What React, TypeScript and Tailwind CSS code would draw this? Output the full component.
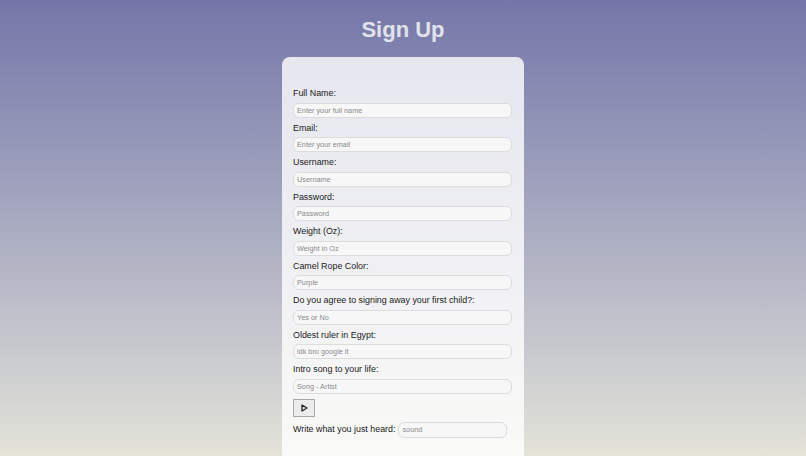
const fields = [
  { label: "Full Name:", placeholder: "Enter your full name" },
  { label: "Email:", placeholder: "Enter your email" },
  { label: "Username:", placeholder: "Username" },
  { label: "Password:", placeholder: "Password" },
  { label: "Weight (Oz):", placeholder: "Weight in Oz" },
  { label: "Camel Rope Color:", placeholder: "Purple" },
  { label: "Do you agree to signing away your first child?:", placeholder: "Yes or No" },
  { label: "Oldest ruler in Egypt:", placeholder: "idk bro google it" },
  { label: "Intro song to your life:", placeholder: "Song - Artist" },
];

function Field({ label, placeholder }: { label: string; placeholder: string }) {
  return (
    <div className="flex flex-col">
      <label className="h-[12px] pt-[1px] text-[8.9px] leading-[12px] text-[#1a1a1a]">{label}</label>
      <input
        placeholder={placeholder}
        className="mt-[4.5px] mb-[3px] h-[15px] w-[219px] rounded-[6px] border border-[#dcdcdc] bg-[#f7f7f8] px-[3px] text-[7.3px] text-[#333] outline-none placeholder:text-[#8a8a8a]"
      />
    </div>
  );
}

export default function App() {
  return (
    <div
      className="flex h-[456px] flex-col items-center overflow-hidden bg-gradient-to-b from-[#7476a8] to-[#e3e3d8]"
      style={{ fontFamily: '"Liberation Sans", Arial, sans-serif' }}
    >
      <h1 className="mt-[17px] h-[26px] text-[22px] font-bold leading-[26px] text-[#e2e2ea]">Sign Up</h1>
      <div className="mt-[14px] w-[242px] flex-1 rounded-t-[8px] bg-white/80 px-[11px] pt-[29px]">
        {fields.map((f) => (
          <Field key={f.label} {...f} />
        ))}
        <button className="mt-[2px] flex h-[18px] w-[22px] items-center justify-center border border-[#a8a8a8] bg-[#ececec]">
          <svg width="7" height="8" viewBox="0 0 7 8">
            <path d="M1 1 L6 4 L1 7 Z" fill="none" stroke="#222" strokeWidth="1.3" strokeLinejoin="round" />
          </svg>
        </button>
        <div className="mt-[5px] flex items-center">
          <span className="text-[8.9px] text-[#1a1a1a]">Write what you just heard:</span>
          <input
            placeholder="sound"
            className="ml-[3px] h-[16px] w-[109px] rounded-[6px] border border-[#dcdcdc] bg-[#f7f7f8] px-[3px] text-[7.3px] outline-none placeholder:text-[#8a8a8a]"
          />
        </div>
      </div>
    </div>
  );
}
